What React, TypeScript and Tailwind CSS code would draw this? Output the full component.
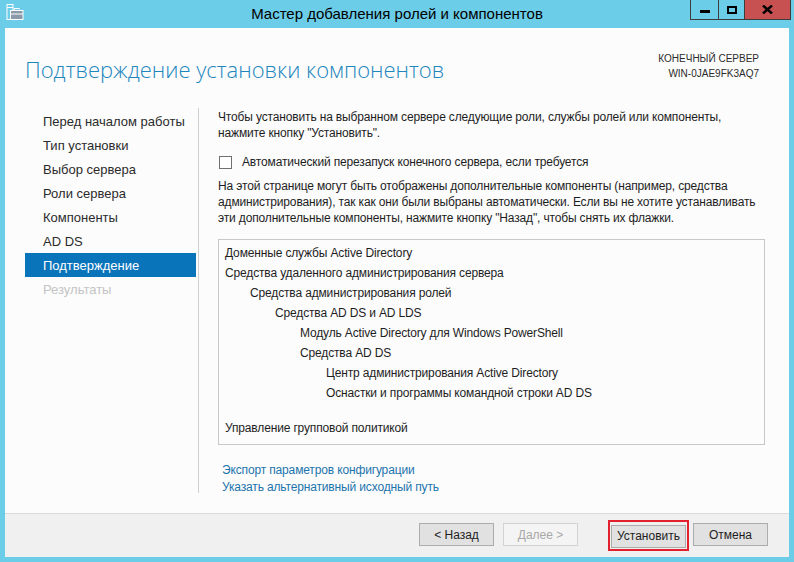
import React from "react";

const STEPS = [
  "Перед началом работы",
  "Тип установки",
  "Выбор сервера",
  "Роли сервера",
  "Компоненты",
  "AD DS",
  "Подтверждение",
  "Результаты",
];

const ACTIVE_STEP = 6;

// level = indent step (25px each)
const FEATURES: { text: string; level: number }[] = [
  { text: "Доменные службы Active Directory", level: 0 },
  { text: "Средства удаленного администрирования сервера", level: 0 },
  { text: "Средства администрирования ролей", level: 1 },
  { text: "Средства AD DS и AD LDS", level: 2 },
  { text: "Модуль Active Directory для Windows PowerShell", level: 3 },
  { text: "Средства AD DS", level: 3 },
  { text: "Центр администрирования Active Directory", level: 4 },
  { text: "Оснастки и программы командной строки AD DS", level: 4 },
];

const INDENT = ["pl-[6px]", "pl-[31px]", "pl-[56px]", "pl-[81px]", "pl-[107px]"];

function WizardIcon() {
  return (
    <svg width="18" height="18" viewBox="0 0 18 18">
      <rect x="1" y="0.5" width="6" height="15" fill="#6ccde9" stroke="#fff" strokeWidth="1" />
      <line x1="1" y1="3.5" x2="7" y2="3.5" stroke="#fff" />
      <rect x="4.5" y="6.5" width="12.5" height="9" fill="#8a9aa8" stroke="#fff" strokeWidth="1" />
      <rect x="8.5" y="4.5" width="4.5" height="2" fill="none" stroke="#fff" strokeWidth="1" />
      <line x1="4.5" y1="10" x2="17" y2="10" stroke="#fff" />
    </svg>
  );
}

function TitleBar() {
  return (
    <div className="grid h-[28px] grid-cols-[1fr_auto_1fr]">
      <div className="flex items-start pl-[6px] pt-[4px]">
        <WizardIcon />
      </div>
      <div className="pt-[3px] text-[15px] leading-[22px] text-black">
        Мастер добавления ролей и компонентов
      </div>
      <div className="flex items-start justify-end pr-[3px]">
        <div className="flex h-[20px] w-[28px] items-center justify-center border border-r-0 border-t-0 border-[#3c3c3c]">
          <div className="mt-[3px] h-[3px] w-[10px] bg-black" />
        </div>
        <div className="flex h-[20px] w-[26px] items-center justify-center border border-r-0 border-t-0 border-[#3c3c3c]">
          <div className="h-[8px] w-[10px] border-2 border-black" />
        </div>
        <div className="flex h-[20px] w-[47px] items-center justify-center border border-t-0 border-[#3c3c3c] bg-[#c75050]">
          <svg width="11" height="9" viewBox="0 0 11 9">
            <path d="M1 0.5 L10 8.5 M10 0.5 L1 8.5" stroke="#000" strokeWidth="2.4" />
          </svg>
        </div>
      </div>
    </div>
  );
}

function WizardButton({
  text,
  disabled,
  primary,
}: {
  text: string;
  disabled?: boolean;
  primary?: boolean;
}) {
  const button = (
    <button
      className={
        "h-[23px] w-[75px] border text-[12px] leading-none " +
        (disabled
          ? "border-[#d3d3d3] bg-[#f4f4f4] text-[#a8a8a8]"
          : "border-[#acacac] bg-[#e1e1e1] text-[#1e1e1e]")
      }
    >
      {text}
    </button>
  );
  if (!primary) return button;
  return <div className="border-2 border-[#e3202d] p-[1px]">{button}</div>;
}

export default function App() {
  return (
    <div
      className="flex h-[562px] w-[794px] flex-col bg-[#6ccde9]"
      style={{ fontFamily: '"Liberation Sans", Arial, sans-serif' }}
    >
      <TitleBar />
      <div className="mx-[5px] flex h-[529px] flex-col bg-[#fcfcfc]">
        <div className="flex flex-1 flex-col">
          {/* header */}
          <div className="flex h-[80px] items-start justify-between pl-[20px] pr-[30px]">
            <h1
              className="pt-[25px] text-[22px] font-light leading-[32px] text-[#2186bc]"
              style={{ fontFamily: '"Open Sans", "Liberation Sans", sans-serif' }}
            >
              Подтверждение установки компонентов
            </h1>
            <div className="pt-[23px] text-right text-[10px] leading-[15px] text-[#2b2b2b]">
              <div>КОНЕЧНЫЙ СЕРВЕР</div>
              <div>WIN-0JAE9FK3AQ7</div>
            </div>
          </div>

          {/* body */}
          <div className="flex h-[385px] pl-[20px] pr-[24px]">
            <nav className="w-[171px] pt-[1px]">
              {STEPS.map((step, i) => (
                <div
                  key={step}
                  className={
                    "h-[24px] pl-[18px] text-[13px] leading-[25px] " +
                    (i === ACTIVE_STEP
                      ? "bg-[#0a74bb] text-white"
                      : i > ACTIVE_STEP
                        ? "text-[#c4c4c4]"
                        : "text-[#2b2b2b]")
                  }
                >
                  {step}
                </div>
              ))}
            </nav>
            <div className="ml-[2px] flex-1 border-l border-[#cfcfcf] pl-[19px] pt-[1px] text-[12px] leading-[16px] tracking-[-0.15px] text-[#1e1e1e]">
              <p className="whitespace-nowrap">
                Чтобы установить на выбранном сервере следующие роли, службы ролей или компоненты,
                <br />
                нажмите кнопку "Установить".
              </p>
              <label className="mt-[13px] flex items-center">
                <span className="ml-[1px] h-[13px] w-[13px] border border-[#707070] bg-white" />
                <span className="ml-[10px]">
                  Автоматический перезапуск конечного сервера, если требуется
                </span>
              </label>
              <p className="mt-[8px] whitespace-nowrap">
                На этой странице могут быть отображены дополнительные компоненты (например, средства
                <br />
                администрирования), так как они были выбраны автоматически. Если вы не хотите устанавливать
                <br />
                эти дополнительные компоненты, нажмите кнопку "Назад", чтобы снять их флажки.
              </p>
              <div className="mt-[13px] h-[206px] border border-[#c8c8c8] pt-[3px]">
                {FEATURES.map((f) => (
                  <div key={f.text} className={"h-[20px] leading-[20px] " + INDENT[f.level]}>
                    {f.text}
                  </div>
                ))}
                <div className="mt-[15px] h-[20px] pl-[6px] leading-[20px]">
                  Управление групповой политикой
                </div>
              </div>
              <div className="mt-[17px] pl-[4px] leading-[17px] text-[#1c74ad]">
                <div>Экспорт параметров конфигурации</div>
                <div>Указать альтернативный исходный путь</div>
              </div>
            </div>
          </div>
        </div>

        {/* footer */}
        <div className="flex h-[44px] items-start justify-end border-t border-[#dadada] bg-[#f0f0f0] pr-[21px] pt-[6px]">
          <div className="flex items-center pt-[3px]">
            <WizardButton text="< Назад" />
          </div>
          <div className="ml-[9px] flex items-center pt-[3px]">
            <WizardButton text="Далее >" disabled />
          </div>
          <div className="ml-[30px]">
            <WizardButton text="Установить" primary />
          </div>
          <div className="ml-[4px] flex items-center pt-[3px]">
            <WizardButton text="Отмена" />
          </div>
        </div>
      </div>
    </div>
  );
}
